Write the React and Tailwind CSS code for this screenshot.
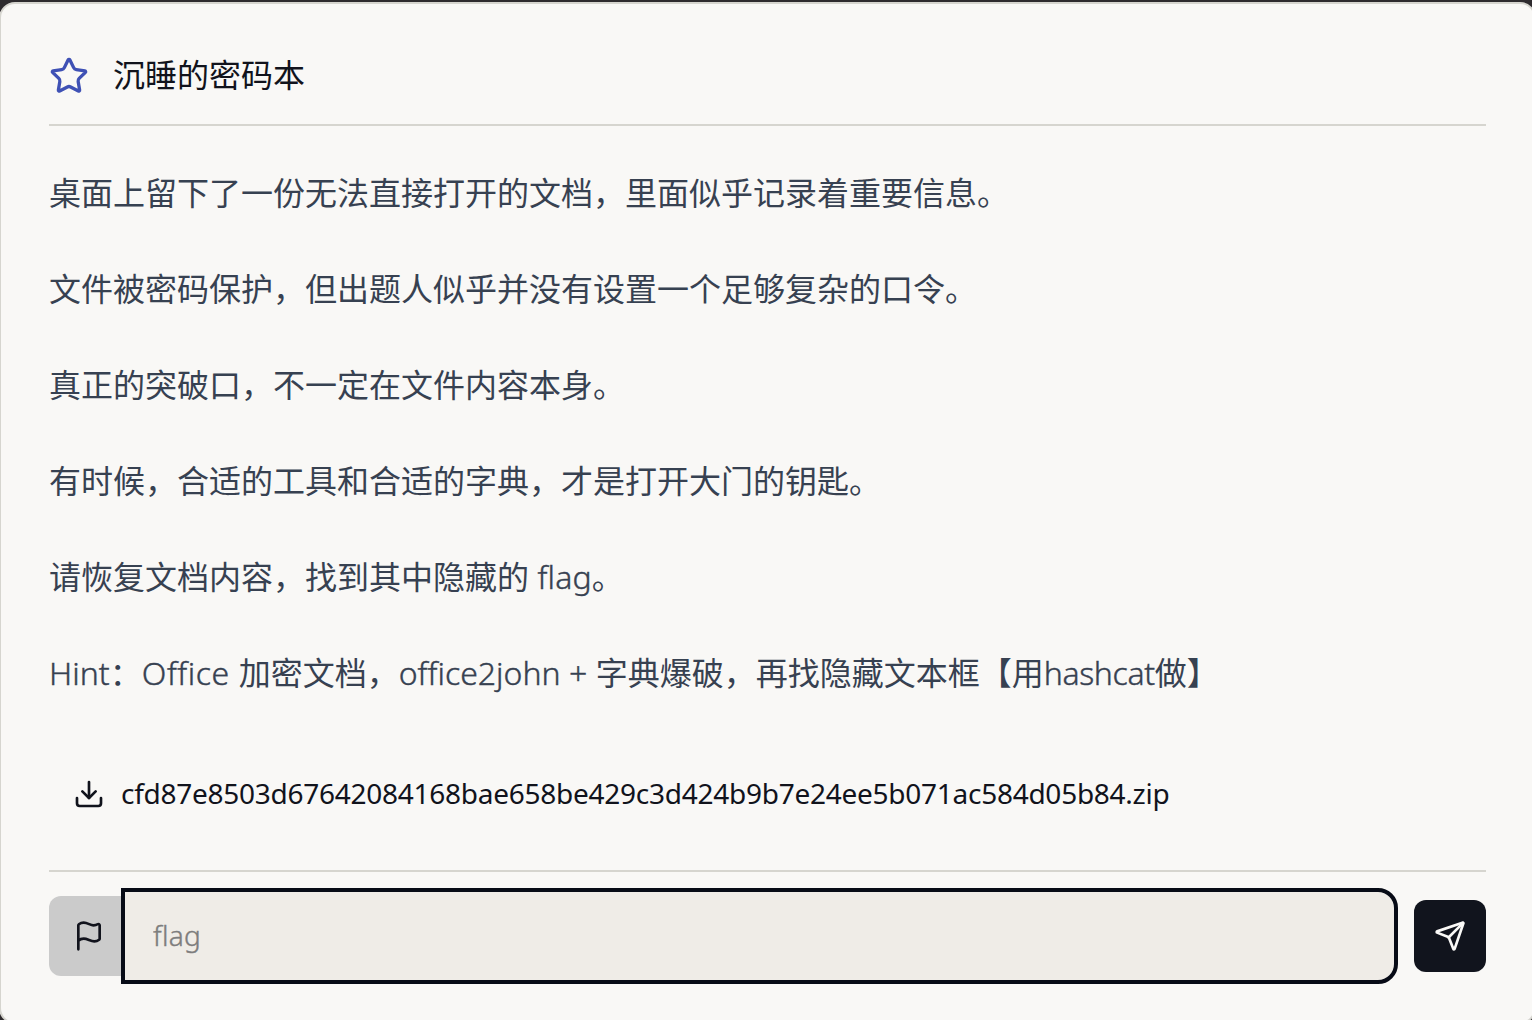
import { Download, Flag, Send, Star } from "lucide-react";

const LINES = [
  "桌面上留下了一份无法直接打开的文档，里面似乎记录着重要信息。",
  "文件被密码保护，但出题人似乎并没有设置一个足够复杂的口令。",
  "真正的突破口，不一定在文件内容本身。",
  "有时候，合适的工具和合适的字典，才是打开大门的钥匙。",
];

function Latin({ children, className = "" }) {
  return (
    <span className={`font-['Noto_Sans'] font-light leading-none [-webkit-text-stroke:0.4px] ${className}`}>
      {children}
    </span>
  );
}

export default function App() {
  return (
    <div className="h-[1020px] w-[1532px] overflow-hidden bg-[#2e2b2e] pt-[2px] font-['Noto_Sans_CJK_SC',sans-serif]">
      <div className="-ml-px h-[1022px] w-[1537px] rounded-2xl border-2 border-[#d6d5cf] bg-[#f9f8f6] px-12 pt-12 text-[32px] leading-[48px]">
        <header className="flex h-[74px] items-start gap-6 border-b-2 border-[#d6d5cf]">
          <Star className="mt-1 size-10 text-[#3f51b5]" />
          <h1 className="-mt-[3px] text-[#11131c]">沉睡的密码本</h1>
        </header>

        <div className="mt-[41px] flex flex-col gap-12 whitespace-nowrap text-[#374151]">
          {LINES.map((line) => (
            <p key={line} className="h-12">{line}</p>
          ))}
          <p className="h-12">
            请恢复文档内容，找到其中隐藏的<Latin className="tracking-[0.15px]"> flag</Latin>。
          </p>
          <p className="h-12">
            <Latin className="tracking-[0.05px]">Hint</Latin>：<Latin className="tracking-[0.55px]">Office </Latin>加密文档，
            <Latin className="tracking-[0.02px]">office2john + </Latin>字典爆破，再找隐藏文本框【用
            <Latin className="tracking-[-0.35px]">hashcat</Latin>做】
          </p>
        </div>

        <a className="mt-[63px] flex h-[72px] items-center gap-4 px-6 text-[#11131c]">
          <Download className="size-8" />
          <span className="-mt-[3px] whitespace-nowrap font-['Noto_Sans'] text-[28px] tracking-[-0.26px]">
            cfd87e8503d67642084168bae658be429c3d424b9b7e24ee5b071ac584d05b84.zip
          </span>
        </a>

        <footer className="mt-10 flex items-center border-t-2 border-[#d6d5cf] pt-4">
          <div className="flex h-20 w-[72px] items-center justify-center rounded-l-xl bg-[#cbcbcb] pl-2 text-[#11131c]">
            <Flag className="size-8" />
          </div>
          <input
            className="h-24 w-[1277px] rounded-r-[20px] border-4 border-[#070b16] bg-[#efece7] px-7 pb-0.5 font-['Noto_Sans'] text-[28px] font-light tracking-[0.3px] text-[#11131c] outline-none [-webkit-text-stroke:0.4px] placeholder:text-[#7d7d7d]"
            placeholder="flag"
          />
          <button className="ml-4 flex size-[72px] items-center justify-center rounded-xl bg-[#11141d] text-[#faf9f7]">
            <Send className="size-8" />
          </button>
        </footer>
      </div>
    </div>
  );
}
